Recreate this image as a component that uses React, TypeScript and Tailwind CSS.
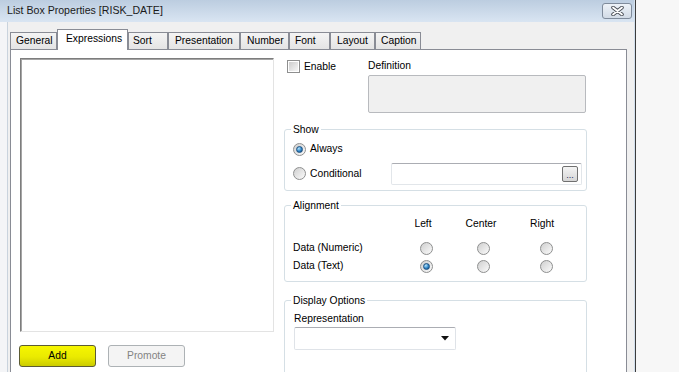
import React from "react";

type TTab = {
  label: string;
  width: string;
  pad: string;
  active?: boolean;
};

const tabs: TTab[] = [
  { label: "General", width: "w-[47px]", pad: "pl-[5px]" },
  { label: "Expressions", width: "w-[71px]", pad: "pl-[8px]", active: true },
  { label: "Sort", width: "w-[40px]", pad: "pl-[4px]" },
  { label: "Presentation", width: "w-[72px]", pad: "pl-[6px]" },
  { label: "Number", width: "w-[49px]", pad: "pl-[6px]" },
  { label: "Font", width: "w-[41px]", pad: "pl-[5px]" },
  { label: "Layout", width: "w-[45px]", pad: "pl-[6px]" },
  { label: "Caption", width: "w-[46px]", pad: "pl-[5px]" },
];

const Radio = ({ checked }: { checked?: boolean }) => (
  <span className="flex h-[13px] w-[13px] shrink-0 items-center justify-center rounded-full border border-[#8e8f8f] bg-[linear-gradient(135deg,#cfcfcf,#fbfbfb)]">
    {checked && (
      <span className="h-[7px] w-[7px] rounded-full border border-[#1b4f80] bg-[radial-gradient(circle_at_35%_30%,#b6e4fb,#2f86c8_55%,#0f416f)]" />
    )}
  </span>
);

const Checkbox = () => (
  <span className="flex h-[13px] w-[13px] shrink-0 items-center justify-center border border-[#8e8f8f] bg-white">
    <span className="h-[9px] w-[9px] bg-[linear-gradient(135deg,#cdcdcd,#f6f6f6)]" />
  </span>
);

const Group = ({
  title,
  className,
  legendClass,
  children,
}: {
  title: string;
  className?: string;
  legendClass?: string;
  children: React.ReactNode;
}) => (
  <fieldset
    className={`rounded-[3px] border border-[#d5dfe5] ${className ?? ""}`}
  >
    <legend className={`px-[2px] leading-[13px] ${legendClass ?? ""}`}>
      {title}
    </legend>
    {children}
  </fieldset>
);

const CloseButton = () => (
  <div className="flex h-[16px] w-[30px] items-center justify-center rounded-[3px] border border-[#7f8b9b] bg-[linear-gradient(#edf2f8,#d2dbe6)]">
    <svg width="13" height="10" viewBox="0 0 13 10">
      <path
        d="M2 1.5 L11 8.5 M11 1.5 L2 8.5"
        stroke="#4a4f57"
        strokeWidth="3.6"
        strokeLinecap="round"
      />
      <path
        d="M2 1.5 L11 8.5 M11 1.5 L2 8.5"
        stroke="#ffffff"
        strokeWidth="1.8"
        strokeLinecap="round"
      />
    </svg>
  </div>
);

const App = () => {
  return (
    <div className="flex h-[372px] w-[679px] overflow-hidden bg-[#f7f7f7] font-['Liberation_Sans',Arial,sans-serif] text-[10.3px] text-black">
      <div className="w-[636px] shrink-0 border-r border-[#3c3c3c]">
        <div className="flex h-full flex-col border-r border-[#d3e0ed]">
          {/* title bar */}
          <div className="flex h-[22px] shrink-0 items-center justify-between bg-[linear-gradient(#bccde0,#d9e5f2)] pl-[7px] pr-[2px]">
            <span className="text-[10.6px] text-[#1a1a1a]">
              List Box Properties [RISK_DATE]
            </span>
            <CloseButton />
          </div>

          <div className="flex flex-1">
            <div className="w-[8px] shrink-0 border-r border-[#c9d3dd] bg-[#f4f5f7]" />
            <div className="flex flex-1 flex-col bg-[#f0f0f0] pl-[2px] pr-[7px] pt-[7px]">
              {/* tabs */}
              <div className="relative z-10 flex h-[20px] items-end">
                {tabs.map(tab =>
                  tab.active ? (
                    <div
                      key={tab.label}
                      className={`-mb-px flex h-[21px] shrink-0 items-center border border-b-0 border-[#898c95] bg-white pb-[2px] ${tab.width} ${tab.pad}`}
                    >
                      {tab.label}
                    </div>
                  ) : (
                    <div
                      key={tab.label}
                      className={`flex h-[17px] shrink-0 items-center border border-b-0 border-[#898c95] bg-[linear-gradient(#f4f4f4,#e4e4e4)] ${tab.width} ${tab.pad}`}
                    >
                      {tab.label}
                    </div>
                  )
                )}
              </div>

              {/* tab page */}
              <div className="flex h-[360px] w-[617px] shrink-0 gap-[10px] border border-[#898c95] bg-white pl-[9px] pt-[8px]">
                <div className="flex w-[254px] shrink-0 flex-col">
                  <div className="h-[274px] border border-[#7d7d7d] border-b-[#e3e3e3] border-r-[#e3e3e3] shadow-[inset_1px_1px_0_#a5a5a5]" />
                  <div className="-ml-px mt-[13px] flex gap-[12px]">
                    <div className="flex h-[22px] w-[77px] items-center justify-center rounded-[3px] border border-[#5c5c34] bg-[linear-gradient(#f6f600,#eaea00_55%,#cccc00)]">
                      Add
                    </div>
                    <div className="flex h-[22px] w-[77px] items-center justify-center rounded-[3px] border border-[#adb2b5] bg-[#f4f4f4] text-[#838383]">
                      Promote
                    </div>
                  </div>
                </div>

                <div className="flex w-[303px] shrink-0 flex-col">
                  {/* enable + definition */}
                  <div className="flex">
                    <div className="flex w-[84px] shrink-0 items-start pl-[3px] pt-[2px]">
                      <div className="flex h-[13px] items-center gap-[4px]">
                        <Checkbox />
                        <span>Enable</span>
                      </div>
                    </div>
                    <div className="flex flex-1 flex-col pr-px pt-px">
                      <span className="leading-[13px]">Definition</span>
                      <div className="mt-[3px] h-[38px] rounded-[2px] border border-[#b8babe] bg-[#f0f0f0]" />
                    </div>
                  </div>

                  <Group
                    title="Show"
                    legendClass="-ml-[2px]"
                    className="mt-[10px] pb-[5px] pl-[8px] pr-[4px]"
                  >
                    <div className="mt-[2px] flex h-[22px] items-center gap-[4px]">
                      <Radio checked />
                      <span>Always</span>
                    </div>
                    <div className="mt-[2px] flex h-[23px] items-center">
                      <div className="flex items-center gap-[4px]">
                        <Radio />
                        <span>Conditional</span>
                      </div>
                      <div className="ml-auto flex h-[22px] w-[191px] items-center justify-end rounded-[2px] border border-[#e2e6ea] border-t-[#abadb3] pr-[3px]">
                        <div className="flex h-[16px] w-[16px] items-end justify-center rounded-[2px] border border-[#707070] bg-[linear-gradient(#f4f4f4,#d6d6d6)] pb-[1px] text-[9px] leading-[9px] text-[#1c2a5a]">
                          ...
                        </div>
                      </div>
                    </div>
                  </Group>

                  <Group
                    title="Alignment"
                    legendClass="-ml-[2px]"
                    className="mt-[8px] pb-[6px] pl-[8px]"
                  >
                    <div className="mt-[5px] grid grid-cols-[113px_40px_74px_52px]">
                      <div className="h-[14px]" />
                      <div className="flex h-[14px] items-center justify-center pr-[6px]">Left</div>
                      <div className="flex h-[14px] items-center justify-center pr-[4px]">Center</div>
                      <div className="flex h-[14px] items-center justify-center pr-[8px]">Right</div>

                      <div className="mt-[8px] flex h-[18px] items-center">Data (Numeric)</div>
                      <div className="mt-[8px] flex h-[18px] items-center justify-center"><Radio /></div>
                      <div className="mt-[8px] flex h-[18px] items-center justify-center"><Radio /></div>
                      <div className="mt-[8px] flex h-[18px] items-center justify-center"><Radio /></div>

                      <div className="flex h-[18px] items-center">Data (Text)</div>
                      <div className="flex h-[18px] items-center justify-center"><Radio checked /></div>
                      <div className="flex h-[18px] items-center justify-center"><Radio /></div>
                      <div className="flex h-[18px] items-center justify-center"><Radio /></div>
                    </div>
                  </Group>

                  <Group
                    title="Display Options"
                    legendClass="-ml-[3px]"
                    className="mt-[12px] h-[120px] pl-[9px]"
                  >
                    <div className="mt-[5px] leading-[13px]">Representation</div>
                    <div className="mt-[2px] flex h-[23px] w-[162px] items-center justify-end rounded-[2px] border border-[#dfe3e8] border-t-[#abadb3] pr-[6px]">
                      <svg width="8" height="5" viewBox="0 0 8 5">
                        <path d="M0 0 H8 L4 4.5 Z" fill="#111" />
                      </svg>
                    </div>
                  </Group>
                </div>
              </div>
            </div>
          </div>
        </div>
      </div>
      <div className="flex-1" />
    </div>
  );
};

export default App;
